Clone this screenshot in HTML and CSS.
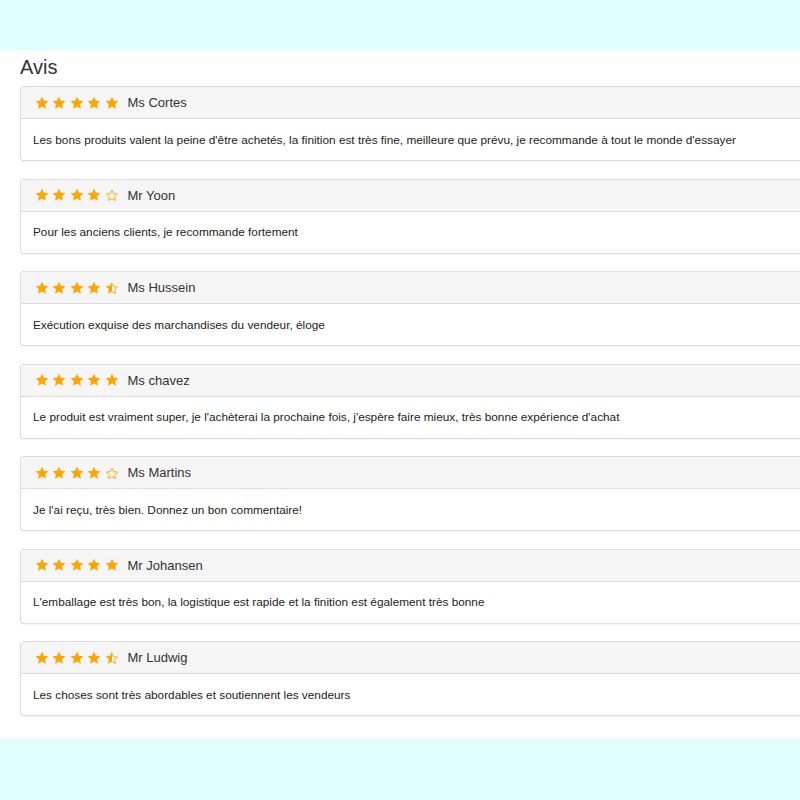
FILE: index.html
```html
<!DOCTYPE html>
<html lang="fr">
<head>
<meta charset="utf-8">
<title>Avis</title>
<link rel="stylesheet" href="styles.css">
</head>
<body>
<svg width="0" height="0" class="defs" aria-hidden="true">
  <defs>
    <symbol id="star" viewBox="0 0 24 24"><path d="M12 1.2l3.3 7 7.6.9-5.6 5.2 1.5 7.5L12 18l-6.8 3.8 1.5-7.5L1.1 9.1l7.6-.9z"/></symbol>
    <symbol id="star-o" viewBox="0 0 24 24"><path d="M12 3.6l2.6 5.5.3.6.6.1 6 .7-4.4 4.1-.5.4.1.6 1.2 5.9-5.3-2.9-.6-.3-.6.3-5.3 2.9 1.2-5.9.1-.6-.5-.4-4.4-4.1 6-.7.6-.1.3-.6z" fill="none" stroke="currentColor" stroke-width="1.6" stroke-linejoin="round"/></symbol>
    <symbol id="star-h" viewBox="0 0 24 24"><path d="M12 1.2v16.8l-6.8 3.8 1.5-7.5L1.1 9.1l7.6-.9z"/><path d="M12 3.6l2.6 5.5.3.6.6.1 6 .7-4.4 4.1-.5.4.1.6 1.2 5.9-5.3-2.9-.6-.3" fill="none" stroke="currentColor" stroke-width="1.6" stroke-linejoin="round"/></symbol>
  </defs>
</svg>
<header class="band"></header>
<main class="content">
  <h2 class="title">Avis</h2>

  <div class="card">
    <div class="card-head">
      <span class="stars"><svg><use href="#star"/></svg><svg><use href="#star"/></svg><svg><use href="#star"/></svg><svg><use href="#star"/></svg><svg><use href="#star"/></svg></span>
      <span class="name">Ms Cortes</span>
    </div>
    <div class="card-body">Les bons produits valent la peine d'être achetés, la finition est très fine, meilleure que prévu, je recommande à tout le monde d'essayer</div>
  </div>

  <div class="card">
    <div class="card-head">
      <span class="stars"><svg><use href="#star"/></svg><svg><use href="#star"/></svg><svg><use href="#star"/></svg><svg><use href="#star"/></svg><svg><use href="#star-o"/></svg></span>
      <span class="name">Mr Yoon</span>
    </div>
    <div class="card-body">Pour les anciens clients, je recommande fortement</div>
  </div>

  <div class="card">
    <div class="card-head">
      <span class="stars"><svg><use href="#star"/></svg><svg><use href="#star"/></svg><svg><use href="#star"/></svg><svg><use href="#star"/></svg><svg><use href="#star-h"/></svg></span>
      <span class="name">Ms Hussein</span>
    </div>
    <div class="card-body">Exécution exquise des marchandises du vendeur, éloge</div>
  </div>

  <div class="card">
    <div class="card-head">
      <span class="stars"><svg><use href="#star"/></svg><svg><use href="#star"/></svg><svg><use href="#star"/></svg><svg><use href="#star"/></svg><svg><use href="#star"/></svg></span>
      <span class="name">Ms chavez</span>
    </div>
    <div class="card-body">Le produit est vraiment super, je l'achèterai la prochaine fois, j'espère faire mieux, très bonne expérience d'achat</div>
  </div>

  <div class="card">
    <div class="card-head">
      <span class="stars"><svg><use href="#star"/></svg><svg><use href="#star"/></svg><svg><use href="#star"/></svg><svg><use href="#star"/></svg><svg><use href="#star-o"/></svg></span>
      <span class="name">Ms Martins</span>
    </div>
    <div class="card-body">Je l'ai reçu, très bien. Donnez un bon commentaire!</div>
  </div>

  <div class="card">
    <div class="card-head">
      <span class="stars"><svg><use href="#star"/></svg><svg><use href="#star"/></svg><svg><use href="#star"/></svg><svg><use href="#star"/></svg><svg><use href="#star"/></svg></span>
      <span class="name">Mr Johansen</span>
    </div>
    <div class="card-body">L'emballage est très bon, la logistique est rapide et la finition est également très bonne</div>
  </div>

  <div class="card">
    <div class="card-head">
      <span class="stars"><svg><use href="#star"/></svg><svg><use href="#star"/></svg><svg><use href="#star"/></svg><svg><use href="#star"/></svg><svg><use href="#star-h"/></svg></span>
      <span class="name">Mr Ludwig</span>
    </div>
    <div class="card-body">Les choses sont très abordables et soutiennent les vendeurs</div>
  </div>
</main>
<footer class="band band-bottom"></footer>
</body>
</html>
```

FILE: styles.css
```css
html, body {
  margin: 0;
  padding: 0;
  overflow: hidden;
}
body {
  background: #e0ffff;
  font-family: "Liberation Sans", Arial, sans-serif;
  color: #333;
  width: 800px;
}
.defs {
  position: absolute;
  width: 0;
  height: 0;
}
.band {
  height: 50px;
}
.band-bottom {
  height: 62px;
}
.content {
  background: #fff;
  padding: 5px 0 4.5px 20px;
  height: 688px;
  box-sizing: border-box;
}
.title {
  margin: 0 0 7px 0;
  font-size: 20px;
  font-weight: normal;
  line-height: 24px;
  color: #333;
}
.card {
  width: 800px;
  border: 1px solid #ddd;
  border-radius: 3px;
  background: #fff;
  margin-bottom: 17.5px;
  box-shadow: 0 1px 1px rgba(0,0,0,0.04);
}
.card-head {
  height: 31px;
  background: #f5f5f5;
  border-bottom: 1px solid #ddd;
  display: flex;
  align-items: center;
  padding-left: 13.5px;
}
.stars {
  display: flex;
  gap: 3.5px;
  color: #ffa500;
  fill: #ffa500;
}
.stars svg {
  width: 14px;
  height: 14px;
  display: block;
}
.name {
  margin-left: 9px;
  font-size: 13px;
  color: #333;
}
.card-body {
  height: 41px;
  display: flex;
  align-items: center;
  padding-left: 12px;
  font-size: 11.8px;
  color: #222;
}
```
